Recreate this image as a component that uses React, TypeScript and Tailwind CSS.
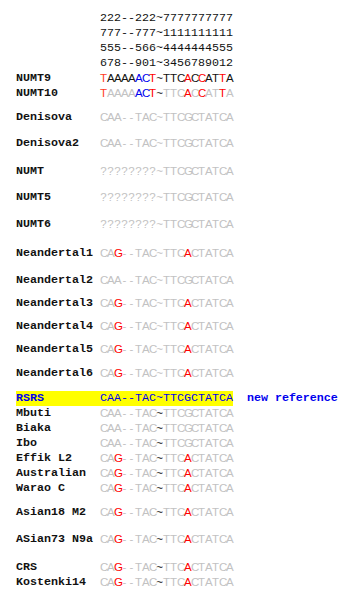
import React from "react";

type Row = {
  label: string;
  seq: string;
  colors: string; // one code per char: k black, g grey, r red, b blue, o orange
  mt: string;
  mono?: boolean;
  highlight?: boolean;
  note?: string;
};

const colorClass: Record<string, string> = {
  k: "text-[#111111]",
  g: "text-[#c2c2c2]",
  r: "text-[#ff0000]",
  b: "text-[#0000ee]",
  o: "text-[#ff3b1f]",
};

const NEAND = "CAG--TAC~TTCACTATCA";
const NEAND_C = "ggrgggggggggrgggggg";
const NEAND_CK = "ggrgggggkgggrgggggg";
const PLAIN = "CAA--TAC~TTCGCTATCA";
const PLAIN_C = "ggggggggggggggggggg";
const PLAIN_CK = "ggggggggkgggggggggg";
const Q = "????????~TTCGCTATCA";

const header = [
  "222--222~7777777777",
  "777--777~1111111111",
  "555--566~4444444555",
  "678--901~3456789012",
];

const rows: Row[] = [
  { label: "NUMT9", seq: "TAAAAACT~TTCACCATTA", colors: "okkkkbbrkkkkrkrkkrk", mt: "mt-0" },
  { label: "NUMT10", seq: "TAAAAACT~TTCACCATTA", colors: "oggggbbrkgggrgrggrg", mt: "mt-0" },
  { label: "Denisova", seq: PLAIN, colors: PLAIN_C, mt: "mt-[9px]" },
  { label: "Denisova2", seq: PLAIN, colors: PLAIN_C, mt: "mt-[11px]" },
  { label: "NUMT", seq: Q, colors: PLAIN_C, mt: "mt-[13px]" },
  { label: "NUMT5", seq: Q, colors: PLAIN_C, mt: "mt-[11px]" },
  { label: "NUMT6", seq: Q, colors: PLAIN_C, mt: "mt-[12px]" },
  { label: "Neandertal1", seq: NEAND, colors: NEAND_C, mt: "mt-[14px]" },
  { label: "Neandertal2", seq: PLAIN, colors: PLAIN_C, mt: "mt-[12px]" },
  { label: "Neandertal3", seq: NEAND, colors: NEAND_C, mt: "mt-[8px]" },
  { label: "Neandertal4", seq: NEAND, colors: NEAND_C, mt: "mt-[8px]" },
  { label: "Neandertal5", seq: NEAND, colors: NEAND_C, mt: "mt-[8px]" },
  { label: "Neandertal6", seq: NEAND, colors: NEAND_C, mt: "mt-[9px]" },
  { label: "RSRS", seq: PLAIN, colors: PLAIN_C, mt: "mt-[10px]", mono: true, highlight: true, note: "new reference" },
  { label: "Mbuti", seq: PLAIN, colors: PLAIN_CK, mt: "mt-0" },
  { label: "Biaka", seq: PLAIN, colors: PLAIN_CK, mt: "mt-0" },
  { label: "Ibo", seq: PLAIN, colors: PLAIN_CK, mt: "mt-0" },
  { label: "Effik L2", seq: NEAND, colors: NEAND_CK, mt: "mt-0" },
  { label: "Australian", seq: NEAND, colors: NEAND_CK, mt: "mt-0" },
  { label: "Warao C", seq: NEAND, colors: NEAND_CK, mt: "mt-0" },
  { label: "Asian18 M2", seq: NEAND, colors: NEAND_CK, mt: "mt-[9px]" },
  { label: "ASian73 N9a", seq: NEAND, colors: NEAND_CK, mt: "mt-[12px]" },
  { label: "CRS", seq: NEAND, colors: NEAND_CK, mt: "mt-[13px]" },
  { label: "Kostenki14", seq: NEAND, colors: NEAND_CK, mt: "mt-0" },
];

const mono = "font-['Liberation_Mono',monospace] text-[11.67px]";
const sans = "font-['Liberation_Sans',Arial,sans-serif] text-[11.5px]";

const Seq = ({ seq, colors }: { seq: string; colors: string }) => (
  <span className={`flex ${sans}`}>
    {seq.split("").map((ch, i) => (
      <span key={i} className={`inline-block w-[7px] text-center ${colorClass[colors[i]] || colorClass.g}`}>
        {ch}
      </span>
    ))}
  </span>
);

export default function App() {
  return (
    <div className="w-[352px] h-[600px] bg-white pl-[16px] pt-[11px] overflow-hidden leading-[15px]">
      {header.map((h) => (
        <div key={h} className="flex h-[15px] items-center">
          <span className="w-[84px]" />
          <span className={`${mono} text-[#111111]`}>{h}</span>
        </div>
      ))}
      {rows.map((r) => (
        <div key={r.label} className={`flex h-[15px] items-center ${r.mt}`}>
          <div className={`flex h-[15px] items-center ${r.highlight ? "bg-[#ffff00]" : ""}`}>
            <span className={`w-[84px] font-bold ${mono} ${r.highlight ? "text-[#0000ee]" : "text-[#111111]"}`}>
              {r.label}
            </span>
            {r.mono ? (
              <span className={`${mono} text-[#0000ee]`}>{r.seq}</span>
            ) : (
              <Seq seq={r.seq} colors={r.colors} />
            )}
          </div>
          {r.note && (
            <span className={`ml-[14px] font-bold ${mono} text-[#0000ee]`}>{r.note}</span>
          )}
        </div>
      ))}
    </div>
  );
}
